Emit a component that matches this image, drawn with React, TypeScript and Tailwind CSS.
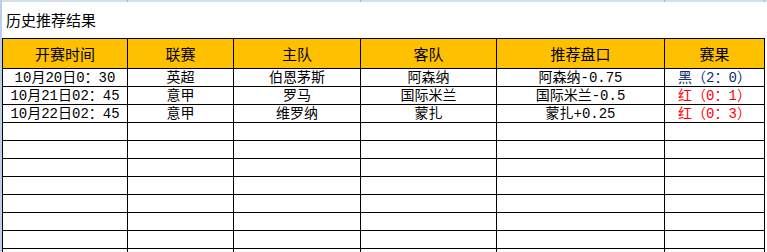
const cols = [125, 106, 127, 136, 168, 100];

const headers = ["开赛时间", "联赛", "主队", "客队", "推荐盘口", "赛果"];

type Row = {
  time: string;
  league: string;
  home: string;
  away: string;
  tip: string;
  result: string;
  win: boolean;
};

const rows: Row[] = [
  { time: "10月20日0：30", league: "英超", home: "伯恩茅斯", away: "阿森纳", tip: "阿森纳-0.75", result: "黑（2：0）", win: false },
  { time: "10月21日02：45", league: "意甲", home: "罗马", away: "国际米兰", tip: "国际米兰-0.5", result: "红（0：1）", win: true },
  { time: "10月22日02：45", league: "意甲", home: "维罗纳", away: "蒙扎", tip: "蒙扎+0.25", result: "红（0：3）", win: true },
];

const font = { fontFamily: '"Liberation Mono", "Noto Sans CJK SC", monospace' };

const gridCols = "grid grid-cols-[125px_106px_127px_136px_168px_100px]";

function Cell({ children, className = "" }: { children?: React.ReactNode; className?: string }) {
  return (
    <div className={`flex items-center justify-center border-r border-b border-black whitespace-nowrap ${className}`}>
      {children}
    </div>
  );
}

export default function App() {
  const blank = Array.from({ length: 8 });

  return (
    <div className="w-[767px] h-[252px] overflow-hidden bg-white flex text-black" style={font}>
      <div className="w-[2px] shrink-0 bg-[#bccfe6]" />
      <div className="flex-1 flex flex-col">
        <div className="h-[2px] shrink-0 bg-[#d3deec] flex">
          <div className="w-[125px]" />
          <div className="w-px bg-[#9db6d6]" />
          <div className="w-[232px]" />
          <div className="w-px bg-[#9db6d6]" />
          <div className="w-[303px]" />
          <div className="w-px bg-[#9db6d6]" />
          <div className="w-[99px]" />
          <div className="w-px bg-[#9db6d6]" />
        </div>
        <div className="h-[36px] shrink-0 flex items-center pl-1 text-[15px] leading-none pb-[1px]">
          <span style={{ fontFamily: '"Noto Sans CJK SC", sans-serif' }}>历史推荐结果</span>
        </div>
        <div className="w-[763px] border-l border-t border-black">
          <div className={`${gridCols} h-[30px] bg-[#ffc000]`}>
            {headers.map((h) => (
              <Cell key={h} className="text-[15px] leading-none">
                <span style={{ fontFamily: '"Noto Sans CJK SC", sans-serif' }}>{h}</span>
              </Cell>
            ))}
          </div>
          {rows.map((r) => (
            <div key={r.time} className={`${gridCols} h-[18px] text-[14px] leading-none`}>
              <Cell>{r.time}</Cell>
              <Cell>{r.league}</Cell>
              <Cell>{r.home}</Cell>
              <Cell>{r.away}</Cell>
              <Cell>{r.tip}</Cell>
              <Cell className={r.win ? "text-[#ff0000]" : "text-[#0f2c6e]"}>{r.result}</Cell>
            </div>
          ))}
          {blank.map((_, i) => (
            <div key={i} className={`${gridCols} h-[18px]`}>
              {cols.map((c) => (
                <Cell key={c} />
              ))}
            </div>
          ))}
        </div>
      </div>
    </div>
  );
}
